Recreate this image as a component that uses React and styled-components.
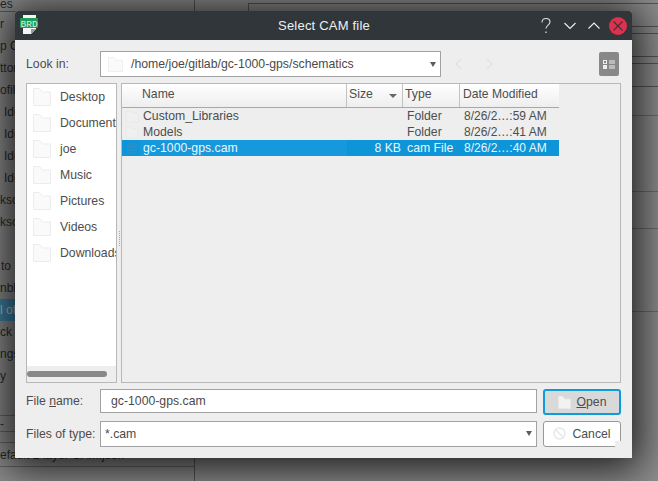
import React from 'react';
import styled, { createGlobalStyle } from 'styled-components';

const Global = createGlobalStyle`
  html, body {
    margin: 0;
    padding: 0;
    width: 658px;
    height: 481px;
    overflow: hidden;
    font-family: "Liberation Sans", Arial, sans-serif;
  }
  * { box-sizing: border-box; }
`;

const Screen = styled.div`
  position: relative;
  width: 658px;
  height: 481px;
  overflow: hidden;
  background: #8f8f8f;
  display: grid;
  grid-template-columns: 195px 1fr;
`;

/* app behind the dialog */
const BackLeft = styled.div`
  border-right: 1px solid #555;
  display: flex;
  flex-direction: column;
  font-size: 12px;
  color: #2a2a2a;
`;

const BackTab = styled.div`
  height: 12px;
  line-height: 8px;
  border-bottom: 1px solid #5c5c5c;
  overflow: hidden;
`;

const BackList = styled.div`
  padding-top: 1px;
  height: 404px;
  border-bottom: 1px solid #666;
`;

const BackItem = styled.div`
  height: 22px;
  line-height: 22px;
  padding-left: ${(p) => p.$indent || 0}px;
  white-space: nowrap;
  background: ${(p) => (p.$active ? '#3f86a8' : 'transparent')};
  color: ${(p) => (p.$active ? '#c8c8c8' : '#2a2a2a')};
`;

const BackBar = styled.div`
  height: ${(p) => p.$h}px;
  line-height: ${(p) => p.$h}px;
  border-bottom: 1px solid #666;
  white-space: nowrap;
`;

const BackRight = styled.div`
  display: flex;
  flex-direction: column;
  font-size: 12px;
  color: #2a2a2a;
`;

const BackHead = styled.div`
  display: flex;
  height: 26px;
  padding: 3px 0 0 14px;
`;

const BackLabel = styled.div`
  width: 39px;
  padding-top: 6px;
`;

const BackField = styled.div`
  flex: 1;
  border: 1px solid #555;
  border-right: none;
  border-bottom: none;
  padding: 5px 0 0 11px;
  white-space: nowrap;
`;

const Rule = styled.div`
  height: 1px;
  margin-bottom: ${(p) => p.$gap}px;
  background: ${(p) => p.$color || '#555'};
`;

/* dialog window */
const Dialog = styled.div`
  position: absolute;
  left: 15px;
  top: 11px;
  width: 617px;
  height: 447px;
  background: #eeeeee;
  border-radius: 3px 3px 0 0;
  box-shadow: 0 4px 40px 8px rgba(0, 0, 0, 0.8);
  display: flex;
  flex-direction: column;
  color: #4d4d4d;
  font-size: 12.25px;
`;

const TitleBar = styled.div`
  height: 29px;
  flex: none;
  background: #31363b;
  border-radius: 3px 3px 0 0;
  display: grid;
  grid-template-columns: 96px 1fr 98px;
  align-items: center;
  padding: 0 2px 0 5px;
`;

const AppIcon = styled.svg`
  width: 18px;
  height: 20px;
  display: block;
  margin-bottom: 1px;
`;

const BadgeText = styled.text`
  font-family: "Liberation Mono", monospace;
  font-size: 9.5px;
  fill: #d8efe0;
`;

const Title = styled.div`
  text-align: center;
  font-size: 13px;
  color: #eff0f1;
  letter-spacing: 0.2px;
`;

const WinControls = styled.div`
  display: flex;
  align-items: center;
  justify-content: flex-end;
`;

const WinButton = styled.svg`
  width: 24px;
  height: 20px;
  display: block;
`;

const Body = styled.div`
  flex: 1;
  display: flex;
  flex-direction: column;
  padding: 11px 11px 0 11px;
  min-height: 0;
`;

const TopRow = styled.div`
  display: flex;
  align-items: center;
  height: 26px;
`;

const FieldLabel = styled.div`
  width: 74px;
  flex: none;
  white-space: nowrap;
  line-height: ${(p) => p.$line || 'normal'};
`;

const Combo = styled.div`
  flex: none;
  width: ${(p) => p.$w};
  height: 26px;
  background: #fff;
  border: 1px solid #a2a2a2;
  display: flex;
  align-items: center;
  padding-left: ${(p) => p.$pad}px;
  gap: ${(p) => p.$gap || 0}px;
  color: #4a4a4a;
`;

const ComboText = styled.span`
  flex: 1;
  white-space: nowrap;
`;

const Caret = styled.span`
  width: 0;
  height: 0;
  margin-right: 4px;
  border-left: 3.5px solid transparent;
  border-right: 3.5px solid transparent;
  border-top: 5px solid #5c5c5c;
`;

const NavIcons = styled.div`
  width: 178px;
  flex: none;
  display: flex;
  align-items: center;
  padding-left: 13px;
`;

const NavArrow = styled.svg`
  width: 10px;
  height: 12px;
  margin-right: 20px;
`;

const ViewButton = styled.div`
  margin-left: auto;
  width: 20px;
  height: 24px;
  background: #888;
  border-radius: 2px;
  display: flex;
  align-items: center;
  justify-content: center;
`;

const Panes = styled.div`
  height: 300px;
  margin-top: 6px;
  display: flex;
`;

const Places = styled.div`
  width: 91px;
  flex: none;
  background: #fff;
  border: 1px solid #b8b8b8;
  display: flex;
  flex-direction: column;
  overflow: hidden;
`;

const PlaceList = styled.div`
  flex: 1;
`;

const Place = styled.div`
  height: 26px;
  display: flex;
  align-items: center;
  padding-left: 6px;
  gap: 9px;
  white-space: nowrap;
`;

const FolderSvg = styled.svg`
  flex: none;
  display: block;
`;

const HScroll = styled.div`
  height: 16px;
  background: #eeeeee;
  display: flex;
  align-items: center;
`;

const HThumb = styled.div`
  width: 80px;
  height: 6px;
  background: #888;
  border-radius: 3px;
`;

const Splitter = styled.div`
  width: 4px;
  flex: none;
  display: flex;
  flex-direction: column;
  justify-content: center;
  align-items: center;
  gap: 1px;
  padding-top: 11px;
`;

const Dot = styled.span`
  width: 1px;
  height: 1px;
  background: #a8a8a8;
`;

const FilePane = styled.div`
  flex: 1;
  border: 1px solid #b8b8b8;
  background: #eeeeee;
  min-width: 0;
`;

const FileHead = styled.div`
  width: 437px;
  height: 24px;
  display: grid;
  grid-template-columns: 225px 56px 57px 99px;
  border-bottom: 1px solid #a8a8a8;
  background: linear-gradient(#ffffff, #eeeeee);
`;

const HeadCell = styled.div`
  display: flex;
  align-items: center;
  padding: 0 0 4px ${(p) => p.$pad}px;
  white-space: nowrap;
  border-right: ${(p) => (p.$last ? 'none' : '1px solid #c2c2c2')};
`;

const DateHead = styled(HeadCell)`
  font-size: 12.1px;
`;

const SortArrow = styled.span`
  margin: 4px 5px 0 auto;
  width: 0;
  height: 0;
  border-left: 4px solid transparent;
  border-right: 4px solid transparent;
  border-top: 4px solid #666;
`;

const FileRow = styled.div`
  width: 437px;
  height: 16px;
  display: grid;
  grid-template-columns: 225px 56px 57px 99px;
  align-items: center;
  background: ${(p) => (p.$selected ? '#0d95d8' : 'transparent')};
  color: ${(p) => (p.$selected ? '#eaf6fc' : '#4d4d4d')};
`;

const NameCell = styled.div`
  height: 16px;
  line-height: 16px;
  display: flex;
  padding-left: 2px;
  white-space: nowrap;
  background: ${(p) => (p.$selected ? 'linear-gradient(90deg, #0d95d8 16px, #1699dc 20px)' : 'transparent')};
`;

const RowIcon = styled.svg`
  width: 16px;
  height: 16px;
  margin-right: 3px;
  flex: none;
`;

const SizeCell = styled.div`
  text-align: right;
  padding-right: 2px;
`;

const TypeCell = styled.div`
  padding-left: 4px;
`;

const DateCell = styled.div`
  padding-left: 4px;
  white-space: nowrap;
  font-size: 12px;
`;

const FormRow = styled.div`
  display: flex;
  align-items: ${(p) => p.$align || 'center'};
  height: ${(p) => p.$h}px;
  margin-top: ${(p) => p.$top}px;
`;

const NameInput = styled.div`
  width: 437px;
  height: 24px;
  background: #fff;
  border: 1px solid #a2a2a2;
  display: flex;
  align-items: center;
  padding-left: 10px;
  color: #4a4a4a;
`;

const Button = styled.div`
  position: relative;
  width: 78px;
  height: 26px;
  margin-left: 6px;
  flex: none;
  display: flex;
  align-items: center;
  justify-content: center;
  gap: ${(p) => (p.$primary ? 6 : 6)}px;
  border-radius: 3px;
  background: ${(p) => (p.$primary ? '#d9d9d9' : '#fff')};
  border: ${(p) => (p.$primary ? '2px solid #0f9ad9' : '1px solid #999')};
`;

const CornerGlitch = styled.span`
  position: absolute;
  right: -1px;
  bottom: -1px;
  width: 6px;
  height: 6px;
  background: #eeeeee;
`;

const FolderIcon = ({ size = 18, fill = '#fafafa', line = '#ececec' }) => (
  <FolderSvg width={size} height={size} viewBox="0 0 18 18">
    <path d="M.5 17.5V.5h6l3 3.5h8v13.5z" fill={fill} stroke={line} />
  </FolderSvg>
);

const places = ['Desktop', 'Documents', 'joe', 'Music', 'Pictures', 'Videos', 'Downloads'];

const backItems = [
  { t: 'r' }, { t: 'p Co' }, { t: 'ttons' }, { t: 'ofiles' },
  { t: 'Ide', indent: 4 }, { t: 'Ide', indent: 4 }, { t: 'Ide', indent: 4 }, { t: 'Ide', indent: 4 },
  { t: 'ksc' }, { t: 'ksc' }, { t: '' }, { t: 'to', indent: 1 },
  { t: 'nbly' }, { t: 'l of', active: true }, { t: 'ck a' }, { t: 'ngs' }, { t: 'y' },
];

const files = [
  { name: 'Custom_Libraries', size: '', type: 'Folder', date: '8/26/2…:59 AM' },
  { name: 'Models', size: '', type: 'Folder', date: '8/26/2…:41 AM' },
  { name: 'gc-1000-gps.cam', size: '8 KB', type: 'cam File', date: '8/26/2…:40 AM', selected: true },
];

export default function App() {
  return (
    <Screen>
      <Global />
      <BackLeft>
        <BackTab>es</BackTab>
        <BackList>
          {backItems.map((b, i) => (
            <BackItem key={i} $active={b.active} $indent={b.indent}>{b.t}</BackItem>
          ))}
        </BackList>
        <BackBar $h={16}>-</BackBar>
        <BackBar $h={11} />
        <BackBar $h={24}>efault 2 layer CAM.json</BackBar>
      </BackLeft>
      <BackRight>
        <BackHead>
          <BackLabel>Name</BackLabel>
          <BackField>Filter Material</BackField>
        </BackHead>
        <Rule $gap={6} />
        <Rule $gap={22} />
        <Rule $gap={6} />
        <Rule $gap={22} />
        <Rule $gap={28} />
        <Rule $gap={75} $color="#6c6c6c" />
        <Rule $gap={36} $color="#6c6c6c" />
        <Rule $gap={82} $color="#6c6c6c" />
        <Rule $gap={0} $color="#6c6c6c" />
      </BackRight>

      <Dialog>
        <TitleBar>
          <AppIcon viewBox="0 0 18 20">
            <path d="M3 0h13v14l-5 5H3z" fill="#f4f4f4" />
            <path d="M16 14h-5v5z" fill="#9a9a9a" />
            <rect x="0" y="3" width="18" height="10" rx="1" fill="#1f9d55" />
            <BadgeText x="0.500" y="11.500">BRD</BadgeText>
          </AppIcon>
          <Title>Select CAM file</Title>
          <WinControls>
            <WinButton viewBox="0 0 24 20">
              <path d="M8 6.500c0-2.600 1.800-4 4-4s4 1.400 4 3.600c0 3-4 3-4 6.400" fill="none" stroke="#dfe1e2" strokeWidth="1.100" />
              <rect x="11.400" y="15.500" width="1.300" height="1.500" fill="#dfe1e2" />
            </WinButton>
            <WinButton viewBox="0 0 24 20">
              <path d="M6.500 7l5.500 5.500L17.500 7" fill="none" stroke="#eff0f1" strokeWidth="1.100" />
            </WinButton>
            <WinButton viewBox="0 0 24 20">
              <path d="M6.500 12.500L12 7l5.500 5.500" fill="none" stroke="#eff0f1" strokeWidth="1.100" />
            </WinButton>
            <WinButton viewBox="0 0 24 20">
              <circle cx="12" cy="10" r="9" fill="#e0304e" />
              <path d="M7.500 5.500l9 9M16.500 5.500l-9 9" stroke="#31363b" strokeWidth="1.100" />
            </WinButton>
          </WinControls>
        </TitleBar>
        <Body>
          <TopRow>
            <FieldLabel>Look in:</FieldLabel>
            <Combo $w="341px" $pad={7} $gap={8}>
              <FolderIcon size={15} />
              <ComboText>/home/joe/gitlab/gc-1000-gps/schematics</ComboText>
              <Caret />
            </Combo>
            <NavIcons>
              <NavArrow viewBox="0 0 10 12">
                <path d="M7 1L2 6l5 5" fill="none" stroke="#dcdcdc" />
              </NavArrow>
              <NavArrow viewBox="0 0 10 12">
                <path d="M3 1l5 5-5 5" fill="none" stroke="#dcdcdc" />
              </NavArrow>
              <ViewButton>
                <svg width="14" height="14" viewBox="0 0 14 14">
                  <rect x="1.500" y="3.500" width="3" height="3" fill="none" stroke="#eee" />
                  <rect x="1" y="8" width="4" height="4" fill="#eee" />
                  <path d="M7 4h6M7 6h6M7 9h6M7 11h6" stroke="#eee" />
                </svg>
              </ViewButton>
            </NavIcons>
          </TopRow>
          <Panes>
            <Places>
              <PlaceList>
                {places.map((p) => (
                  <Place key={p}>
                    <FolderIcon />
                    {p}
                  </Place>
                ))}
              </PlaceList>
              <HScroll>
                <HThumb />
              </HScroll>
            </Places>
            <Splitter>
              {[0, 1, 2, 3, 4, 5, 6, 7].map((d) => (
                <Dot key={d} />
              ))}
            </Splitter>
            <FilePane>
              <FileHead>
                <HeadCell $pad={20}>Name</HeadCell>
                <HeadCell $pad={2}>
                  Size
                  <SortArrow />
                </HeadCell>
                <HeadCell $pad={2}>Type</HeadCell>
                <DateHead $pad={3} $last>Date Modified</DateHead>
              </FileHead>
              {files.map((f) => (
                <FileRow key={f.name} $selected={f.selected}>
                  <NameCell $selected={f.selected}>
                    <RowIcon viewBox="0 0 16 16">
                      {f.selected ? (
                        <path d="M3 4h10M3 7h10M3 10h10M3 13h8" stroke="#3f8fc0" />
                      ) : (
                        <path d="M2 3h4l2 2h6v9H2z" fill="#f0f0f0" stroke="#e8e8e8" />
                      )}
                    </RowIcon>
                    {f.name}
                  </NameCell>
                  <SizeCell>{f.size}</SizeCell>
                  <TypeCell>{f.type}</TypeCell>
                  <DateCell>{f.date}</DateCell>
                </FileRow>
              ))}
            </FilePane>
          </Panes>
          <FormRow $h={26} $top={6} $align="flex-start">
            <FieldLabel $line="24px">
              File <u>n</u>ame:
            </FieldLabel>
            <NameInput>gc-1000-gps.cam</NameInput>
            <Button $primary>
              <FolderIcon size={13} fill="#f2f2f2" line="#e6e6e6" />
              <span>
                <u>O</u>pen
              </span>
            </Button>
          </FormRow>
          <FormRow $h={27} $top={5}>
            <FieldLabel>Files of type:</FieldLabel>
            <Combo $w="437px" $pad={4}>
              <ComboText>*.cam</ComboText>
              <Caret />
            </Combo>
            <Button>
              <svg width="13" height="13" viewBox="0 0 13 13">
                <circle cx="6.500" cy="6.500" r="5.500" fill="none" stroke="#e8e8e8" strokeWidth="1.500" />
                <path d="M2.500 2.500l8 8" stroke="#e8e8e8" strokeWidth="1.500" />
              </svg>
              <span>Cancel</span>
              <CornerGlitch />
            </Button>
          </FormRow>
        </Body>
      </Dialog>
    </Screen>
  );
}
